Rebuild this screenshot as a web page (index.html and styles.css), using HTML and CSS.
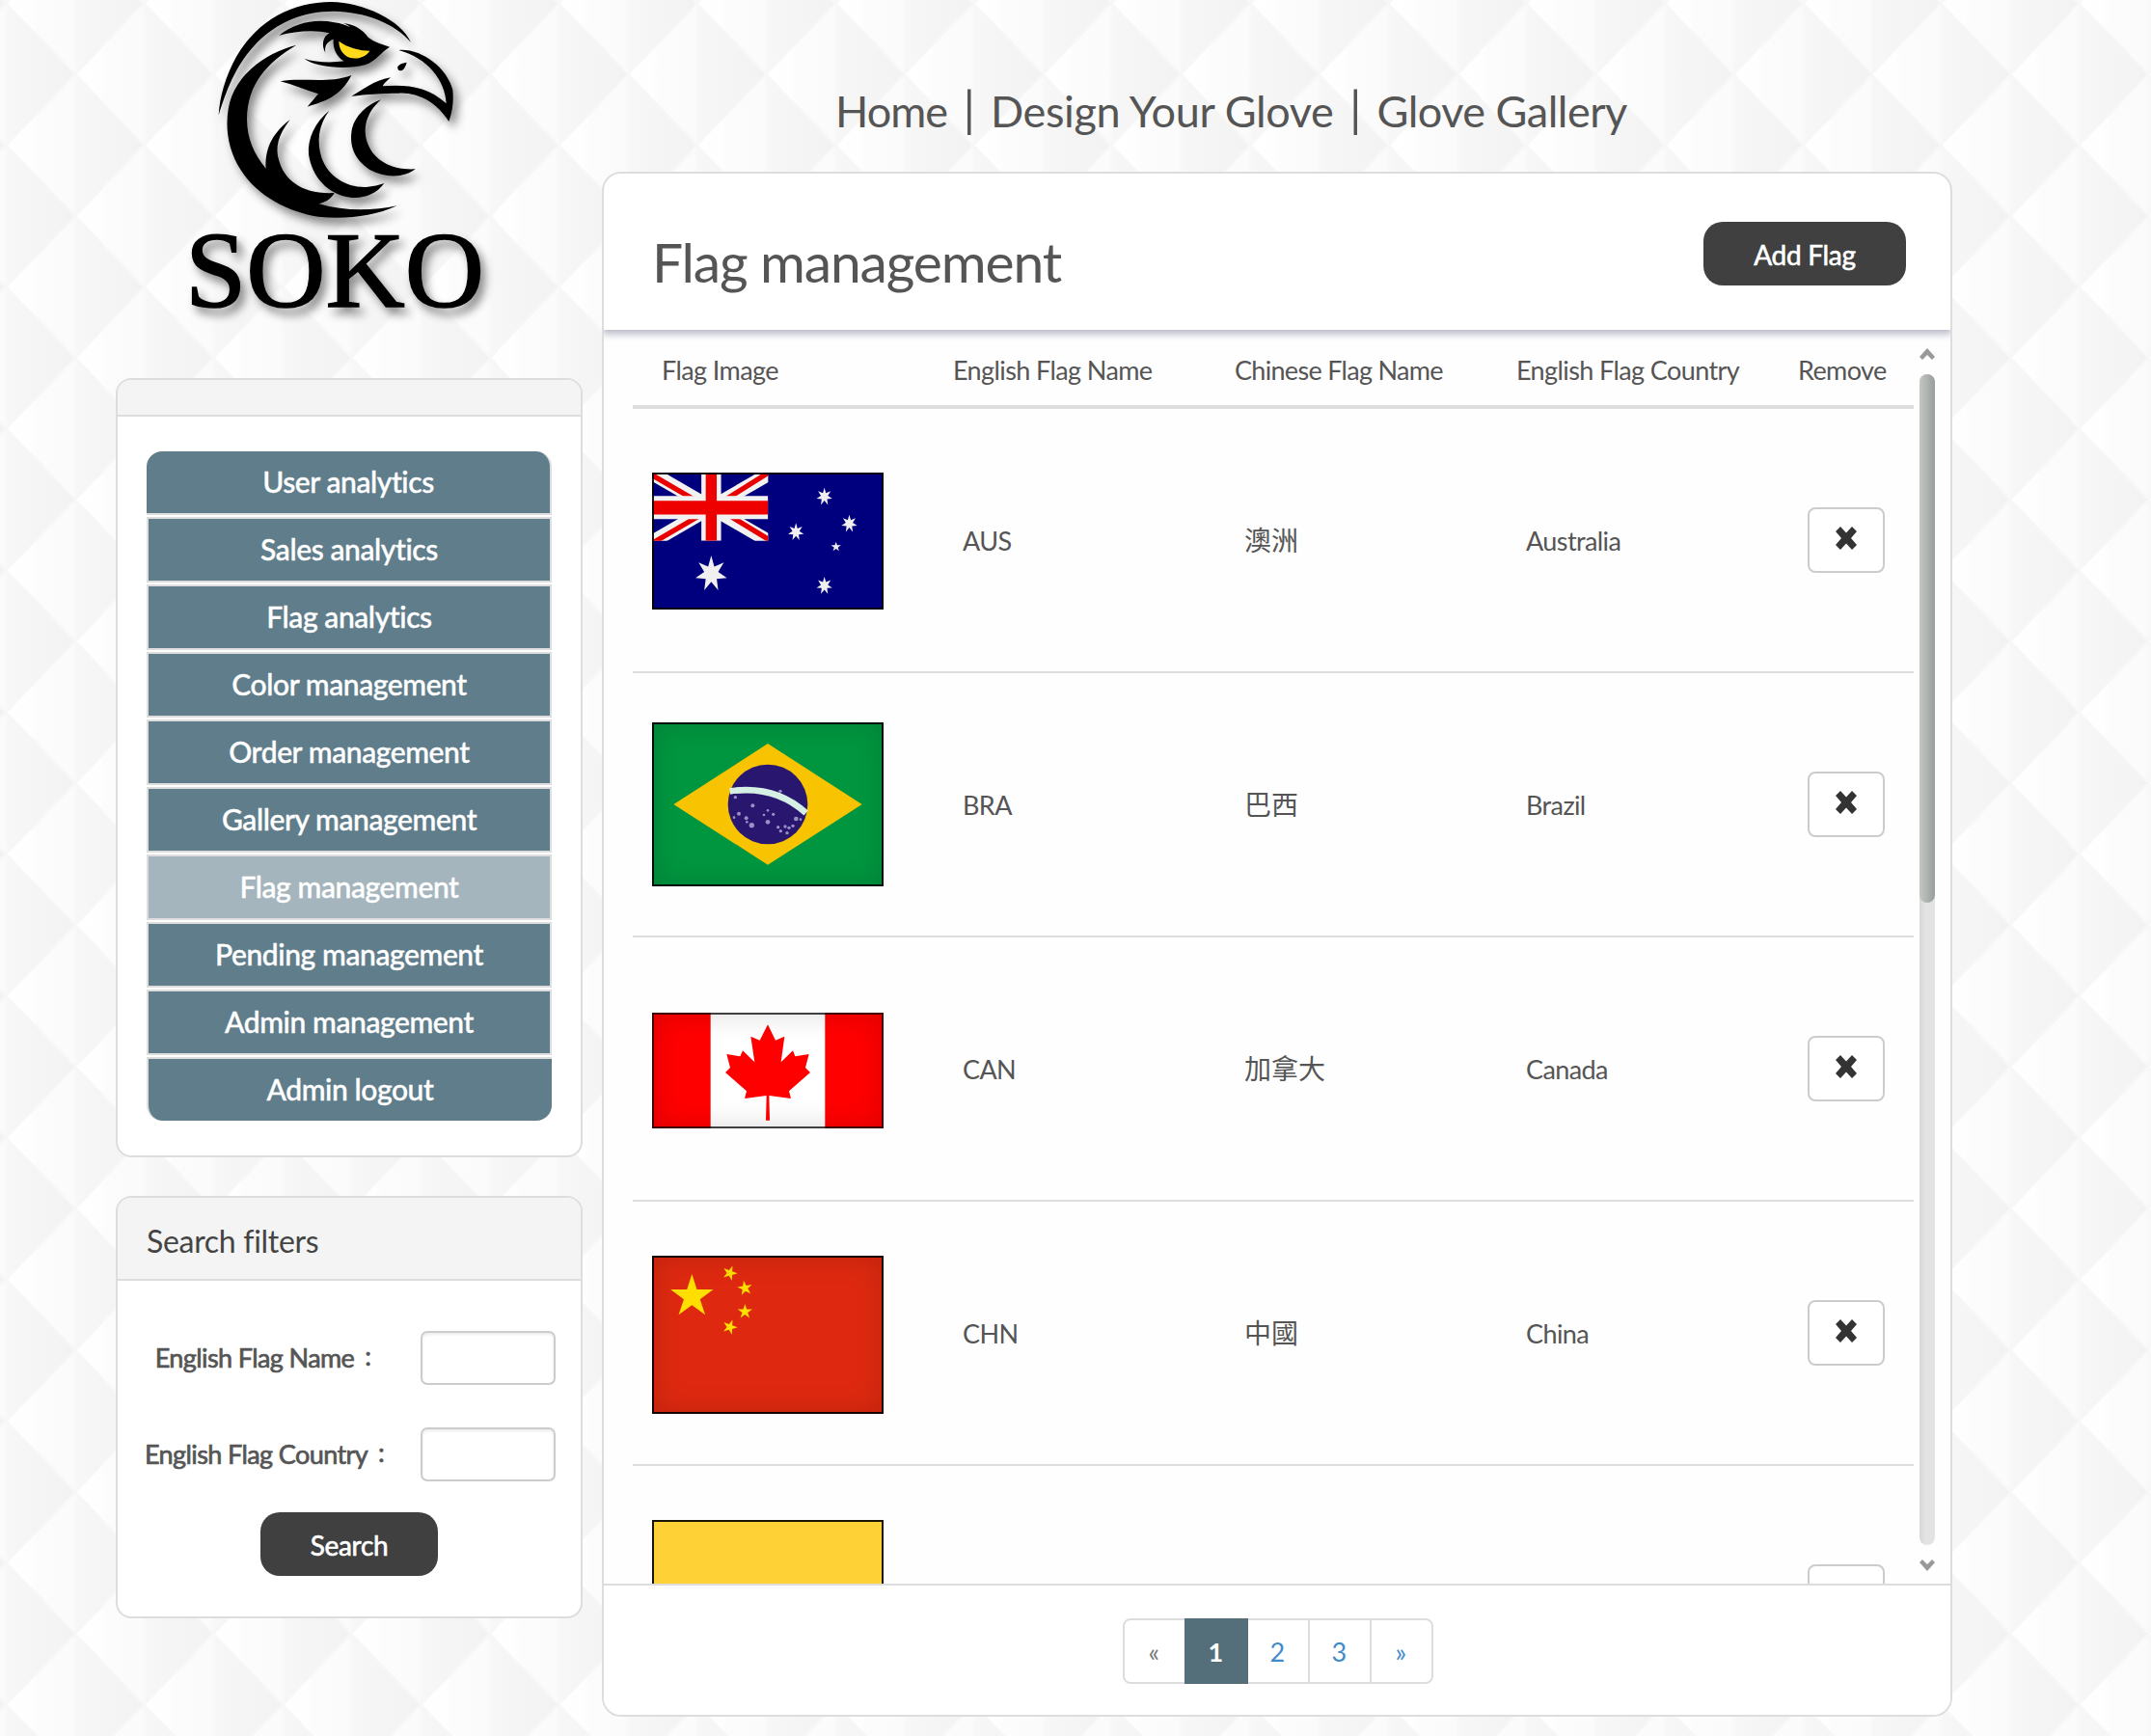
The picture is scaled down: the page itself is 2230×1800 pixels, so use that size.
FILE: index.html
```html
<!DOCTYPE html>
<html lang="en">
<head>
<meta charset="utf-8">
<title>Flag management</title>
<link rel="stylesheet" href="styles.css">
</head>
<body>
<svg class="defs" width="0" height="0" aria-hidden="true">
  <defs>
    <polygon id="star7" points="0,-100 19,-40 78,-62 43,-10 97,22 34,27 43,90 0,44 -43,90 -34,27 -97,22 -43,-10 -78,-62 -19,-40"/>
    <polygon id="star5" points="0,-100 22,-31 95,-31 36,12 59,81 0,38 -59,81 -36,12 -95,-31 -22,-31"/>
    <path id="cross" d="M0 5 L5 0 L11 6.5 L17 0 L22 5 L16 12 L22 19 L17 24 L11 17.5 L5 24 L0 19 L6 12 Z"/>
  </defs>
</svg>
<div class="page">
  <aside class="sidebar">
    <svg class="logo" viewBox="0 0 1050 1050" aria-label="SOKO">
      <path d="M140 358 C144 300 160 240 196 175 C262 62 370 6 490 6 C590 8 708 62 738 132 C690 72 590 36 500 35 C400 34 320 72 260 132 C200 194 170 262 140 358Z"/>
      <path d="M328 110 C380 70 440 58 500 70 C520 73 535 78 548 84 C542 78 534 74 525 72 C560 74 588 92 605 116 C625 132 650 138 672 146 C645 162 630 190 595 202 C530 218 440 208 406 182 C440 194 490 196 530 190 C505 175 495 150 497 122 C480 128 468 140 472 164 C458 140 465 112 485 103 C440 92 380 96 328 110Z"/>
      <path class="eye" d="M514 128 C540 148 580 158 610 158 C595 180 570 184 550 180 C525 172 514 150 514 128Z"/>
      <path d="M382 140 C290 195 230 260 228 370 C228 430 250 480 287 524 C284 470 300 420 362 372 C325 420 315 460 328 500 C345 560 400 605 500 600 C490 618 475 628 452 634 C530 658 620 656 695 640 C620 675 530 682 450 674 C360 660 260 610 210 530 C170 470 160 400 170 340 C185 240 280 165 382 140Z"/>
      <path d="M484 344 C450 390 445 440 460 490 C480 550 540 585 600 582 C620 580 640 576 655 570 C630 605 590 618 550 614 C480 606 430 550 420 480 C416 430 440 380 484 344Z"/>
      <path d="M645 310 C600 350 585 400 605 450 C625 500 680 530 752 526 C720 552 660 556 610 528 C560 495 545 450 555 400 C565 360 600 325 645 310Z"/>
      <path d="M332 253 C400 240 480 262 553 234 C520 300 470 315 416 332 C430 315 440 305 450 292 C410 280 370 262 332 253Z"/>
      <path d="M700 156 C770 150 850 210 868 280 C872 320 866 350 856 378 C820 320 760 286 700 290 C640 290 600 294 553 299 C590 280 620 250 675 241 C665 250 655 258 650 268 C720 262 790 268 848 322 C845 250 790 180 700 156Z"/>
      <path d="M697 208 C700 200 712 196 725 194 C722 205 716 220 705 220 C698 220 696 214 697 208Z"/>
      <text x="36" y="955" textLength="930" lengthAdjust="spacingAndGlyphs">SOKO</text>
    </svg>

    <section class="panel menu-panel">
      <div class="panel-head"></div>
      <nav class="menu">
        <a>User analytics</a>
        <a>Sales analytics</a>
        <a>Flag analytics</a>
        <a>Color management</a>
        <a>Order management</a>
        <a>Gallery management</a>
        <a class="active">Flag management</a>
        <a>Pending management</a>
        <a>Admin management</a>
        <a>Admin logout</a>
      </nav>
    </section>

    <section class="panel filter-panel">
      <div class="panel-head"><h3>Search filters</h3></div>
      <form class="filters">
        <label class="field"><span class="field-label">English Flag Name<i>:</i></span><input type="text"></label>
        <label class="field"><span class="field-label">English Flag Country<i>:</i></span><input type="text"></label>
        <button type="button" class="btn-dark">Search</button>
      </form>
    </section>
  </aside>

  <div class="content">
    <nav class="topnav"><a>Home</a><span>|</span><a>Design Your Glove</a><span>|</span><a>Glove Gallery</a></nav>
    <main class="card">
      <header class="card-head">
        <h1>Flag management</h1>
        <button type="button" class="btn-dark">Add Flag</button>
      </header>
      <div class="scroll">
        <div class="table">
          <div class="row head"><span>Flag Image</span><span>English Flag Name</span><span>Chinese Flag Name</span><span>English Flag Country</span><span>Remove</span></div>
          <div class="row">
            <div class="flag aus">
              <svg viewBox="50 30 716 426" preserveAspectRatio="none">
                <clipPath id="canton"><rect x="50" y="30" width="359" height="212"/></clipPath>
                <rect x="50" y="30" width="716" height="426" fill="#00007f"/>
                <g clip-path="url(#canton)">
                  <path d="M56 36 L409 242 M409 36 L56 242" stroke="#f2f2f2" stroke-width="42"/>
                  <path d="M40 32 L180 114 M274 116 L420 24 M50 250 L200 162 M290 164 L420 244" stroke="#e80000" stroke-width="16"/>
                  <path d="M233 30 V242" stroke="#f2f2f2" stroke-width="61"/>
                  <path d="M50 139 H409" stroke="#f2f2f2" stroke-width="72"/>
                  <path d="M233 30 V242" stroke="#ee0000" stroke-width="34"/>
                  <path d="M50 139 H409" stroke="#ee0000" stroke-width="43"/>
                </g>
                <g fill="#f0f0f0">
                  <use href="#star7" transform="translate(233 345) scale(.5 .57)"/>
                  <use href="#star7" transform="translate(583 105) scale(.25 .28)"/>
                  <use href="#star7" transform="translate(495 215) scale(.25 .28)"/>
                  <use href="#star7" transform="translate(660 189) scale(.25 .28)"/>
                  <use href="#star7" transform="translate(583 382) scale(.25 .28)"/>
                  <use href="#star5" transform="translate(619 261) scale(.16)"/>
                </g>
              </svg>
            </div>
            <span>AUS</span><span class="zh">澳洲</span><span>Australia</span>
            <button class="remove"><svg viewBox="0 0 22 24"><use href="#cross"/></svg></button>
          </div>
          <div class="row">
            <div class="flag bra">
              <svg viewBox="48 54 720 510" preserveAspectRatio="none">
                <rect x="48" y="54" width="720" height="510" fill="#00963f"/>
                <polygon points="115,309 408,120 701,309 408,497" fill="#f8c300"/>
                <circle cx="408" cy="309" r="124" fill="#29166f"/>
                <path d="M290 268 C380 255 460 275 527 336" fill="none" stroke="#d5efe4" stroke-width="20"/>
                <g fill="#9a90c4">
                  <circle cx="307" cy="287" r="5"/><circle cx="361" cy="313" r="6"/><circle cx="318" cy="338" r="6"/><circle cx="303" cy="350" r="4"/>
                  <circle cx="341" cy="352" r="6"/><circle cx="343" cy="364" r="4"/><circle cx="358" cy="374" r="8"/><circle cx="408" cy="364" r="7"/>
                  <circle cx="408" cy="328" r="4"/><circle cx="396" cy="342" r="4"/><circle cx="425" cy="340" r="5"/><circle cx="447" cy="268" r="5"/>
                  <circle cx="440" cy="380" r="5"/><circle cx="448" cy="392" r="5"/><circle cx="462" cy="378" r="5"/><circle cx="474" cy="382" r="5"/>
                  <circle cx="468" cy="398" r="5"/><circle cx="486" cy="376" r="5"/><circle cx="496" cy="354" r="7"/><circle cx="510" cy="356" r="4"/>
                </g>
              </svg>
            </div>
            <span>BRA</span><span class="zh">巴西</span><span>Brazil</span>
            <button class="remove"><svg viewBox="0 0 22 24"><use href="#cross"/></svg></button>
          </div>
          <div class="row">
            <div class="flag can">
              <svg viewBox="48 60 720 360" preserveAspectRatio="none">
                <rect x="48" y="60" width="720" height="360" fill="#f00"/>
                <rect x="230" y="60" width="356" height="360" fill="#fff"/>
                <polygon fill="#f00" points="408,97 432,146 460,134 449,214 486,178 493,196 536,189 525,231 540,246 474,304 480,327 412,318 414,395 402,395 404,318 336,327 342,304 276,246 291,231 280,189 322,196 330,178 367,214 355,134 383,146"/>
              </svg>
            </div>
            <span>CAN</span><span class="zh">加拿大</span><span>Canada</span>
            <button class="remove"><svg viewBox="0 0 22 24"><use href="#cross"/></svg></button>
          </div>
          <div class="row">
            <div class="flag chn">
              <svg viewBox="48 816 720 492" preserveAspectRatio="none">
                <rect x="48" y="816" width="720" height="492" fill="#de2910"/>
                <g fill="#ffde00">
                  <use href="#star5" transform="translate(172 943) scale(.7)"/>
                  <use href="#star5" transform="translate(290 870) rotate(20) scale(.24)"/>
                  <use href="#star5" transform="translate(337 917) rotate(-10) scale(.24)"/>
                  <use href="#star5" transform="translate(337 990) scale(.24)"/>
                  <use href="#star5" transform="translate(290 1038) rotate(20) scale(.24)"/>
                </g>
              </svg>
            </div>
            <span>CHN</span><span class="zh">中國</span><span>China</span>
            <button class="remove"><svg viewBox="0 0 22 24"><use href="#cross"/></svg></button>
          </div>
          <div class="row">
            <div class="flag col">
              <svg viewBox="0 0 240 160" preserveAspectRatio="none"><rect width="240" height="160" fill="#fed237"/></svg>
            </div>
            <span></span><span></span><span></span>
            <button class="remove"><svg viewBox="0 0 22 24"><use href="#cross"/></svg></button>
          </div>
        </div>
        <div class="scrollbar">
          <svg class="arrow" viewBox="0 0 16 12"><path d="M0 9 L8 0 L16 9 L13 12 L8 7 L3 12Z"/></svg>
          <div class="track"><div class="thumb"></div></div>
          <svg class="arrow" viewBox="0 0 16 12"><path d="M0 3 L3 0 L8 5 L13 0 L16 3 L8 12Z"/></svg>
        </div>
      </div>
      <footer class="card-foot">
        <ul class="pages"><li class="off">«</li><li class="on">1</li><li>2</li><li>3</li><li>»</li></ul>
      </footer>
    </main>
  </div>
</div>
</body>
</html>
```
FILE: styles.css
```css
* { box-sizing: border-box; }

body {
  margin: 0;
  height: 1800px;
  overflow: hidden;
  color: #555;
  font-family: Lato, "Noto Sans CJK TC", sans-serif;
  font-size: 27px;
  letter-spacing: -.6px;
  background-color: #f8f8f8;
  background-image: url("data:image/svg+xml,%3Csvg xmlns='http://www.w3.org/2000/svg' width='143.3' height='147' viewBox='0 0 143.3 147'%3E%3Cdefs%3E%3ClinearGradient id='g'%3E%3Cstop offset='0' stop-color='%23fff'/%3E%3Cstop offset='.18' stop-color='%23fefefe'/%3E%3Cstop offset='.22' stop-color='%23fcfcfc'/%3E%3Cstop offset='.48' stop-color='%23fbfbfb'/%3E%3Cstop offset='.52' stop-color='%23f7f7f7'/%3E%3Cstop offset='.7' stop-color='%23f5f5f5'/%3E%3Cstop offset='.86' stop-color='%23f4f4f4'/%3E%3Cstop offset='1' stop-color='%23f2f2f2'/%3E%3C/linearGradient%3E%3Cpath id='d' d='M0 0L71.65-73.5L143.3 0L71.65 73.5Z' fill='url(%23g)' stroke='%23f7f7f7' stroke-width='2'/%3E%3C/defs%3E%3Cuse href='%23d' y='73.5'/%3E%3Cuse href='%23d' x='-71.65'/%3E%3Cuse href='%23d' x='71.65'/%3E%3Cuse href='%23d' x='-71.65' y='147'/%3E%3Cuse href='%23d' x='71.65' y='147'/%3E%3C/svg%3E");
  background-size: 143.3px 147px;
  background-position: 6px 77px;
}

.defs { position: absolute; }
h1, h3, ul { margin: 0; padding: 0; font-weight: 400; }
button { font: inherit; }

.page {
  display: grid;
  grid-template-columns: 484px 1400px;
  column-gap: 20px;
  padding-left: 120px;
}

/* sidebar */
.logo {
  display: block;
  width: 350px;
  height: 350px;
  margin: 0 0 42px 60px;
  overflow: visible;
  filter: drop-shadow(5px 7px 5px rgba(0, 0, 0, .45));
}
.logo .eye { fill: #ffd91a; }
.logo text {
  font-family: "Liberation Serif", serif;
  font-size: 336px;
  letter-spacing: 0;
  stroke: #000;
  stroke-width: 5px;
}

.panel {
  background: #fff;
  border: 2px solid #ddd;
  border-radius: 16px;
  overflow: hidden;
}
.panel-head {
  background: #f4f4f4;
  border-bottom: 2px solid #ddd;
}
.menu-panel { height: 808px; margin-bottom: 40px; }
.menu-panel .panel-head { height: 38px; }
.menu {
  display: flex;
  flex-direction: column;
  gap: 2px;
  padding: 36px 30px 0;
}
.menu a {
  height: 68px;
  border: 2px solid #ddd;
  background: #607d8b;
  color: #fff;
  font-size: 30px;
  font-weight: 500;
  letter-spacing: -.4px;
  line-height: 62px;
  text-align: center;
  -webkit-text-stroke: .4px currentColor;
}
.menu a:first-child {
  height: 66px;
  border-width: 0 2px 2px 0;
  border-radius: 16px 16px 0 0;
}
.menu a:last-child {
  height: 66px;
  border-width: 2px 0 0 2px;
  border-radius: 0 0 16px 16px;
}
.menu a.active { background: #a5b5be; }

.filter-panel { height: 438px; }
.filter-panel .panel-head { height: 86px; padding: 23px 30px; }
h3 { font-size: 32px; line-height: 44px; color: #444; letter-spacing: -.3px; }
.filters { padding: 52px 26px 0 28px; display: flex; flex-direction: column; }
.field {
  display: flex;
  justify-content: space-between;
  align-items: center;
  height: 56px;
  margin-bottom: 44px;
}
.field-label {
  width: 256px;
  text-align: center;
  white-space: nowrap;
  line-height: 54px;
  -webkit-text-stroke: .7px currentColor;
}
.field-label i {
  display: inline-block;
  width: 28px;
  font-style: normal;
  line-height: 50px;
  vertical-align: 2px;
}
.field input {
  width: 140px;
  height: 56px;
  border: 2px solid #ccc;
  border-radius: 7px;
  box-shadow: inset 0 2px 3px rgba(0, 0, 0, .08);
}
.btn-dark {
  height: 66px;
  padding: 2px 0 0;
  border: 0;
  border-radius: 20px;
  background: #404040;
  color: #fff;
  font-size: 28px;
  letter-spacing: -.3px;
  -webkit-text-stroke: .6px currentColor;
}
.filters .btn-dark { width: 184px; margin: -12px 0 0 120px; }

/* content */
.topnav {
  display: flex;
  height: 178px;
  padding: 87px 0 0 242px;
  font-size: 45px;
  letter-spacing: -.5px;
  line-height: 56px;
  white-space: nowrap;
}
.topnav a:first-child { letter-spacing: -1px; }
.topnav a:nth-of-type(2) { letter-spacing: -.35px; }
.topnav span { margin: -3px 16.5px 0; font-size: 50px; }
.card {
  height: 1602px;
  display: flex;
  flex-direction: column;
  background: #fefefe;
  border: 2px solid #ddd;
  border-radius: 20px;
  overflow: hidden;
}
.card-head {
  height: 162px;
  display: flex;
  justify-content: space-between;
  padding: 50px 46px 0 50px;
  background: #fff;
  box-shadow: 0 2px 8px 2px #b3b5c4;
  position: relative;
}
h1 { font-size: 57px; line-height: 83px; letter-spacing: -1.15px; }
.card-head .btn-dark { width: 210px; }

.scroll {
  height: 1300px;
  display: flex;
  overflow: hidden;
  padding-left: 30px;
}
.table { width: 1328px; flex: none; }
.row {
  display: grid;
  grid-template-columns: 322px 292px 292px 272px 150px;
  align-items: center;
  height: 274px;
  border-bottom: 2px solid #ddd;
}
.row > span { padding-left: 20px; white-space: nowrap; }
.row > .zh { font-size: 28px; letter-spacing: 0; padding-bottom: 2px; }
.row.head { height: 82px; border-bottom: 4px solid #ddd; }
.row.head > span { padding: 4px 0 0 10px; }
.row.head > span:nth-child(3) { letter-spacing: -.7px; }
.row.head > span:first-child,
.row.head > span:last-child { padding-left: 30px; }
.flag { position: relative; width: 240px; margin-left: 20px; }
.flag svg { display: block; width: 100%; height: 100%; }
.flag::after {
  content: "";
  position: absolute;
  inset: 0;
  border: 2px solid rgba(0, 0, 0, .9);
  box-shadow: inset 0 0 30px rgba(0, 0, 0, .14);
}
.flag.aus { height: 142px; margin-top: 2px; }
.flag.aus::after { box-shadow: none; }
.flag.bra { height: 170px; }
.flag.can { height: 120px; margin-top: 4px; }
.flag.can::after { border-color: rgba(0, 0, 0, .75); }
.flag.chn { height: 164px; margin-top: 4px; }
.flag.col { height: 164px; margin-top: 3px; }
.flag.col::after { box-shadow: none; }
.remove {
  width: 80px;
  height: 68px;
  margin-left: 40px;
  padding: 0 0 4px;
  border: 2px solid #ccc;
  border-radius: 8px;
  background: #fff;
  display: flex;
  align-items: center;
  justify-content: center;
}
.remove svg { width: 24px; height: 24px; fill: #333; }

.scrollbar {
  width: 16px;
  margin-left: 6px;
  padding: 19px 0 13px;
  display: flex;
  flex-direction: column;
  justify-content: space-between;
}
.arrow { width: 16px; height: 12px; fill: #999; }
.track {
  height: 1214px;
  border-radius: 8px;
  background: linear-gradient(90deg, #d6d6d6, #e4e4e4 40%, #e2e2e2);
}
.thumb {
  height: 548px;
  border-radius: 8px;
  background: linear-gradient(90deg, #c3c7c3, #9a9e9b);
}

.card-foot {
  flex: 1;
  border-top: 2px solid #ddd;
  background: #fff;
  display: flex;
  justify-content: center;
  padding-top: 34px;
}
.pages { display: flex; list-style: none; margin-left: 2px; }
.pages li {
  width: 66px;
  height: 68px;
  margin-right: -2px;
  padding-right: 2px;
  border: 2px solid #ddd;
  text-align: center;
  line-height: 66px;
  color: #428bca;
  background: #fff;
}
.pages li:first-child { border-radius: 8px 0 0 8px; }
.pages li:last-child { border-radius: 0 8px 8px 0; margin-right: 0; }
.pages .off { color: #777; }
.pages .on { position: relative; color: #fff; background: #546e7a; border-color: #546e7a; font-weight: 700; }
```
